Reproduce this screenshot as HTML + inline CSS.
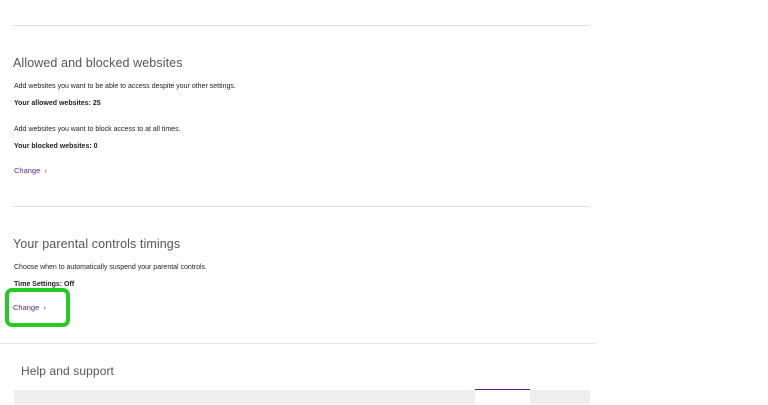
<!DOCTYPE html>
<html><head><style>
body{margin:0;width:768px;height:404px;overflow:hidden;background:#fff;font-family:"Liberation Sans",sans-serif;color:#222;position:relative}
.a{position:absolute;white-space:nowrap}
.hr{position:absolute;height:1px;background:#ddd}
h2{margin:0;font-weight:normal;font-size:12.5px;color:#555;position:absolute;white-space:nowrap;letter-spacing:0.1px}
.s{font-size:7px}
.b{font-size:7px;font-weight:bold}
.c{font-size:7.5px;color:#5a1e8c}
</style></head><body>
<div class="hr" style="left:12px;top:25px;width:578px"></div>
<h2 style="left:13px;top:56px">Allowed and blocked websites</h2>
<div class="a s" style="left:14px;top:83px">Add websites you want to be able to access despite your other settings.</div>
<div class="a b" style="left:14px;top:100px">Your allowed websites: 25</div>
<div class="a s" style="left:14px;top:126px">Add websites you want to block access to at all times.</div>
<div class="a b" style="left:14px;top:143px">Your blocked websites: 0</div>
<div class="a c" style="left:14px;top:166px">Change &nbsp;›</div>
<div class="hr" style="left:12px;top:206px;width:578px"></div>
<h2 style="left:13px;top:237px">Your parental controls timings</h2>
<div class="a s" style="left:14px;top:264px">Choose when to automatically suspend your parental controls.</div>
<div class="a b" style="left:14px;top:281px">Time Settings: Off</div>
<div class="a" style="left:5px;top:288px;width:57px;height:31px;border:4px solid #22cc22;border-radius:7px"></div>
<div class="a c" style="left:13px;top:303px">Change &nbsp;›</div>
<div class="hr" style="left:0;top:343px;width:596px;background:#e6e6e6"></div>
<h2 style="left:21px;top:364px;font-size:12px">Help and support</h2>
<div class="a" style="left:14px;top:390px;width:576px;height:14px;background:#eee"></div>
<div class="a" style="left:475px;top:389px;width:55px;height:15px;background:#fff;border-top:1px solid #5a1e8c"></div>
</body></html>
